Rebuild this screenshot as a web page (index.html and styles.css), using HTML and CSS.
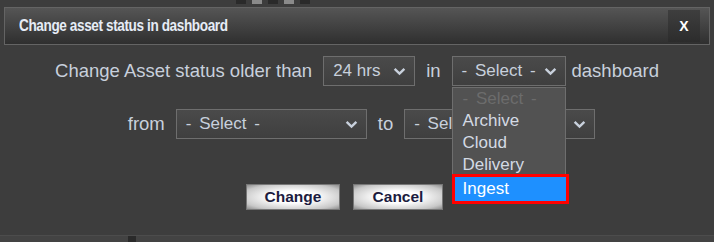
FILE: index.html
```html
<!DOCTYPE html>
<html lang="en">
<head>
    <meta charset="UTF-8">
    <title>Change asset status in dashboard</title>
    <link rel="stylesheet" href="styles.css">
</head>
<body>
    <div class="topStrip">
        <span class="chip"></span><span class="chip light"></span><span class="chip"></span><span class="chip light"></span><span class="chip"></span>
    </div>
    <div class="dialog">
        <div class="titleBar">
            <span class="title">Change asset status in dashboard</span>
            <span class="closeBtn">X</span>
        </div>
        <div class="body">
            <div class="row rowOne">
                <span class="label">Change Asset status older than</span>
                <div class="fakeSelect hrs">24 hrs <svg class="chev" viewBox="0 0 12 8"><path d="M1.5 1.5 L6 6 L10.5 1.5" /></svg></div>
                <span class="label">in</span>
                <div class="selectWrap">
                    <div class="fakeSelect dash">- Select - <svg class="chev" viewBox="0 0 12 8"><path d="M1.5 1.5 L6 6 L10.5 1.5" /></svg></div>
                    <ul class="dropList">
                        <li class="muted">- Select -</li>
                        <li>Archive</li>
                        <li>Cloud</li>
                        <li>Delivery</li>
                        <li class="picked">Ingest</li>
                    </ul>
                </div>
                <span class="label tight">dashboard</span>
            </div>
            <div class="row rowTwo">
                <span class="label">from</span>
                <div class="fakeSelect wide">- Select - <svg class="chev" viewBox="0 0 12 8"><path d="M1.5 1.5 L6 6 L10.5 1.5" /></svg></div>
                <span class="label">to</span>
                <div class="fakeSelect wide">- Select - <svg class="chev" viewBox="0 0 12 8"><path d="M1.5 1.5 L6 6 L10.5 1.5" /></svg></div>
            </div>
            <div class="row buttons">
                <button class="btn">Change</button>
                <button class="btn">Cancel</button>
            </div>
        </div>
    </div>
    <div class="bottomStrip"><span class="knob"></span></div>
</body>
</html>
```

FILE: styles.css
```css
body{
    margin: 0;
    background-color: #3d3d3d;
    font-family: "Liberation Sans", Arial, sans-serif;
    height: 242px;
    overflow: hidden;
    position: relative;
}
.topStrip{
    height: 7px;
    display: flex;
    gap: 6px;
    padding-left: 236px;
}
.chip{
    width: 10px;
    height: 4px;
    background-color: #2a2a2a;
}
.chip.light{
    background-color: #8a8a8a;
}
.dialog{
    margin: 0 4px;
}
.titleBar{
    height: 36px;
    border: 1px solid #646464;
    background: linear-gradient(#555555, #2f2f2f);
    display: flex;
    align-items: center;
    justify-content: space-between;
    padding: 0 9px 0 14px;
}
.title{
    display: inline-block;
    color: #e6ecf6;
    font-size: 17px;
    font-weight: bold;
    letter-spacing: -0.5px;
    transform: scaleX(0.8);
    transform-origin: left center;
}
.closeBtn{
    width: 32px;
    height: 32px;
    background: linear-gradient(#3e3e3e, #2c2c2c);
    color: #ffffff;
    font-weight: bold;
    font-size: 14px;
    display: flex;
    align-items: center;
    justify-content: center;
}
.body{
    padding-top: 11px;
}
.row{
    display: flex;
    align-items: center;
    justify-content: center;
}
.label{
    color: #c8d0dc;
    font-size: 18.5px;
}
.rowOne{
    gap: 11px;
}
.rowOne .tight{
    margin-left: -5px;
}
.rowTwo{
    gap: 11px;
    margin-top: 23px;
    padding-left: 9px;
}
.fakeSelect{
    box-sizing: border-box;
    height: 30px;
    border: 1px solid #6e6e6e;
    background: linear-gradient(#4a4a4a, #3f3f3f);
    color: #c8d0dc;
    font-size: 17px;
    word-spacing: 3px;
    display: flex;
    align-items: center;
    justify-content: space-between;
    padding: 0 8px 0 9px;
}
.hrs{
    width: 92px;
    word-spacing: 0;
}
.dash{
    width: 114px;
}
.wide{
    width: 191px;
}
.chev{
    width: 13px;
    height: 9px;
    fill: none;
    stroke: #c8d0dc;
    stroke-width: 2.2;
}
.selectWrap{
    position: relative;
}
.dropList{
    position: absolute;
    top: 31px;
    left: 0;
    width: 114px;
    box-sizing: border-box;
    margin: 0;
    padding: 0;
    list-style: none;
    background-color: #525252;
    border: 1px solid #6e6e6e;
    z-index: 5;
}
.dropList li{
    height: 22px;
    line-height: 22px;
    font-size: 17px;
    color: #d4dae4;
    padding-left: 10px;
}
.dropList li.muted{
    color: #6c6c6c;
    word-spacing: 3px;
}
.dropList li.picked{
    background-color: #1e90ff;
    color: #ffffff;
    outline: 3px solid #ff0000;
    margin: 1px -1px 0 2px;
    padding-left: 8px;
    height: 24px;
    line-height: 24px;
}
.buttons{
    gap: 13px;
    margin-top: 45px;
    padding-right: 25px;
}
.btn{
    height: 26px;
    border: 1px solid #777;
    background: radial-gradient(ellipse at center, #ffffff 35%, #c8c8c8 80%, #8e8e8e 100%);
    color: #1c1c40;
    font-family: "Liberation Sans", Arial, sans-serif;
    font-weight: bold;
    font-size: 15.5px;
    padding: 0;
}
.btn:first-child{
    width: 94px;
}
.btn:last-child{
    width: 90px;
}
.bottomStrip{
    position: absolute;
    left: 0;
    right: 0;
    bottom: 0;
    height: 6px;
    border-top: 1px solid #4c4c4c;
    background-color: #434343;
}
.knob{
    display: block;
    width: 8px;
    height: 6px;
    margin-left: 128px;
    background-color: #2a2a2a;
}
```
